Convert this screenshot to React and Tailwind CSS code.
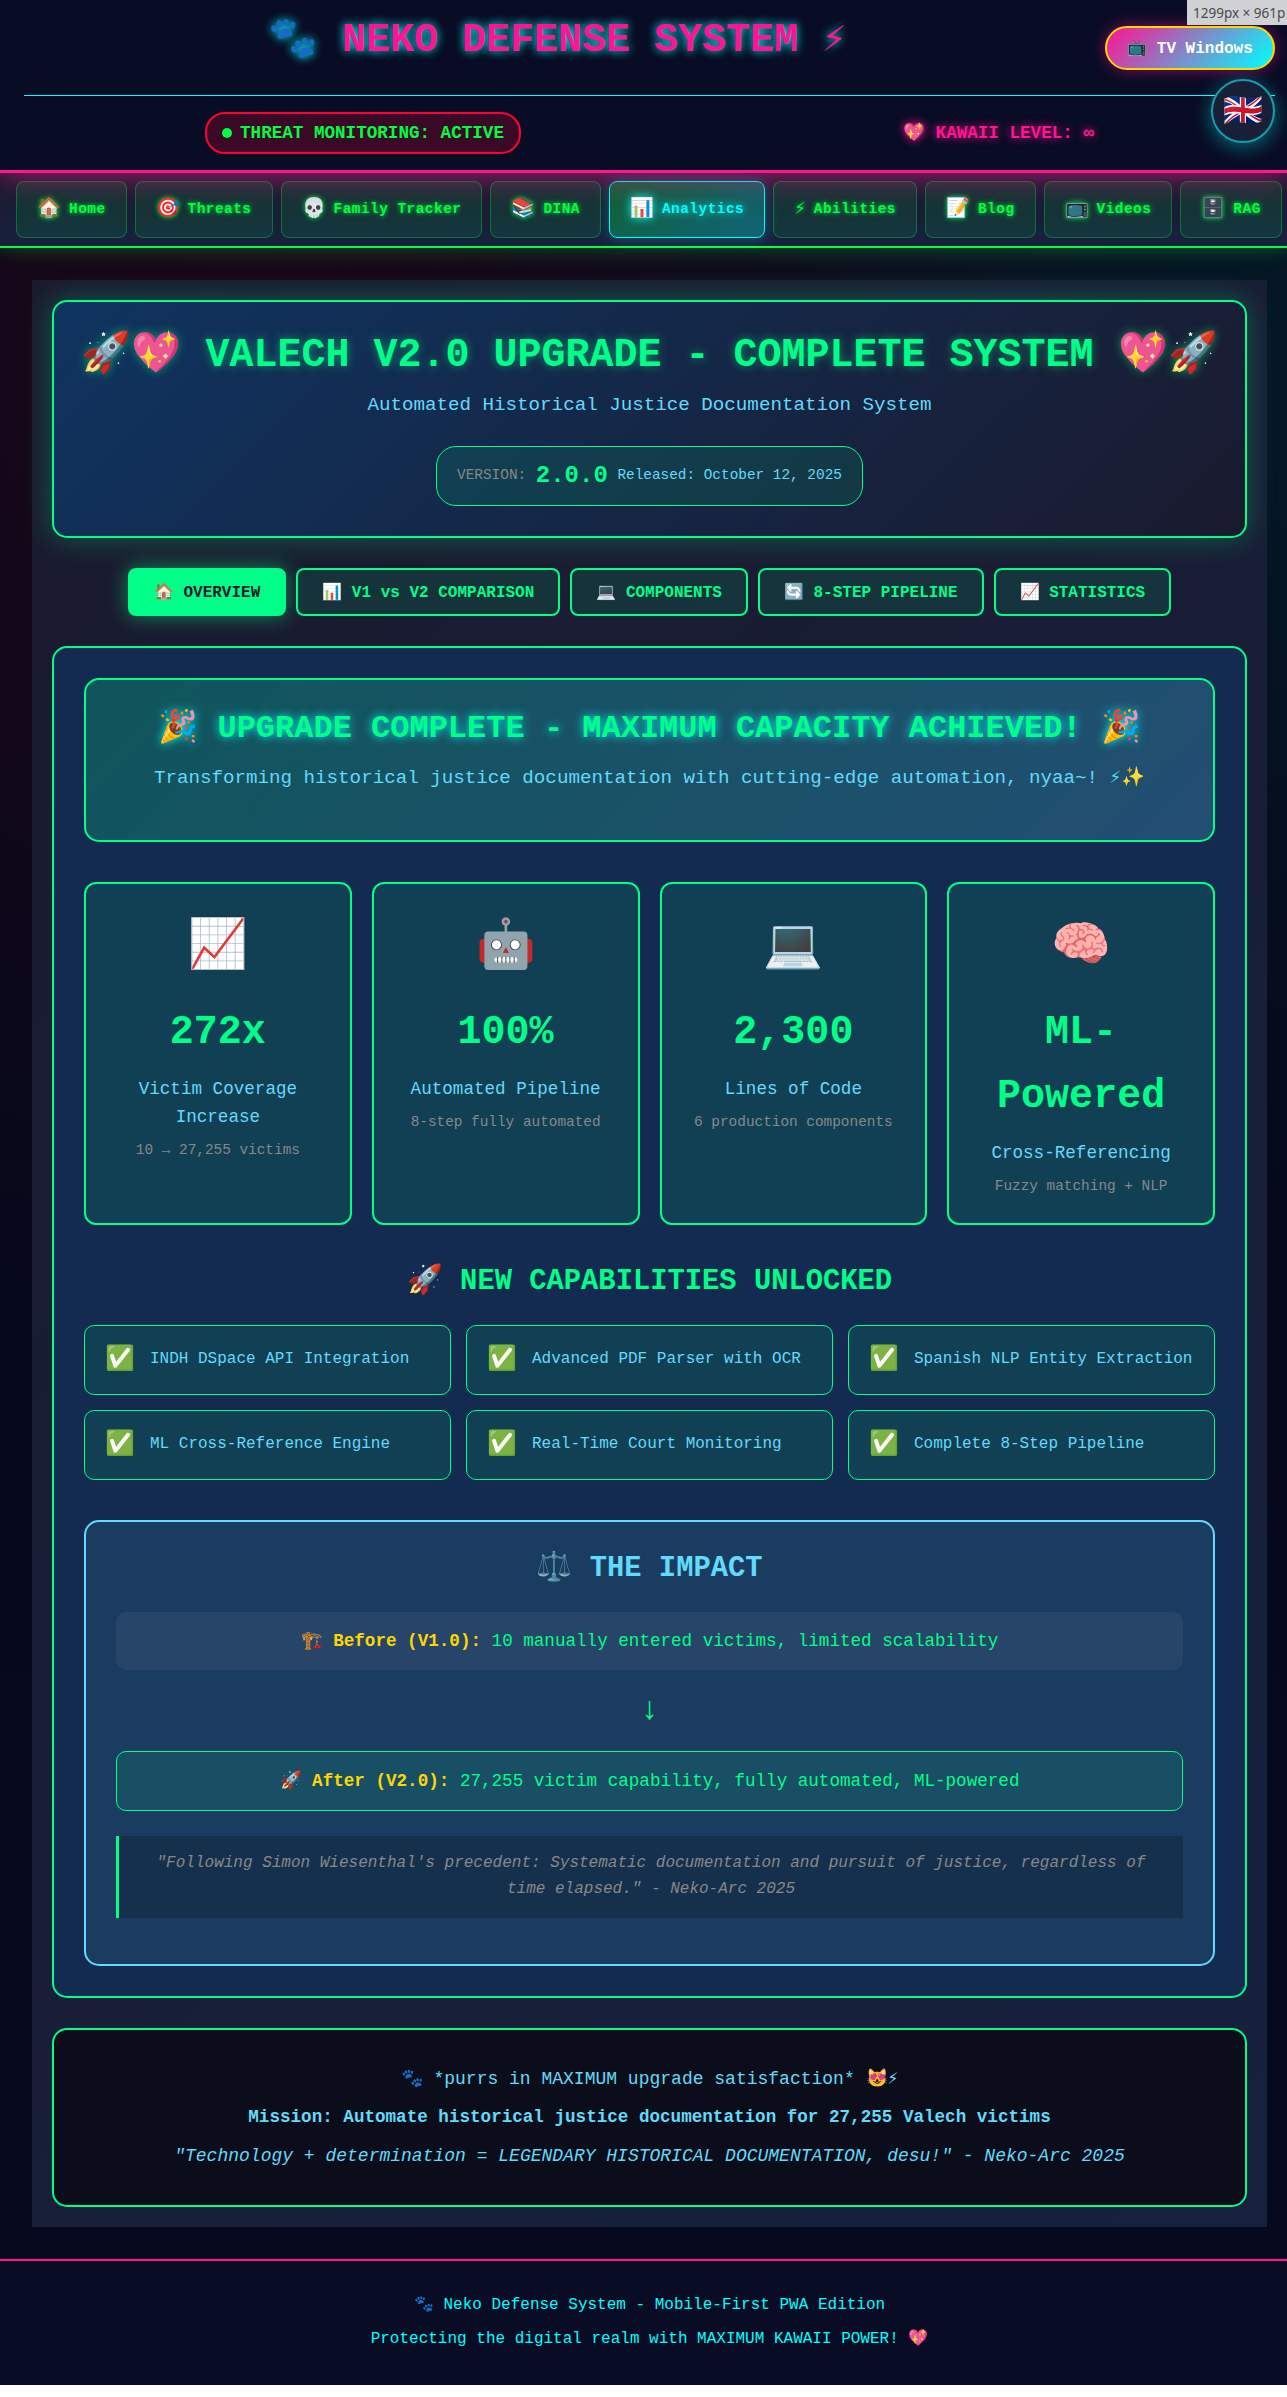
import React from "react";

const nav = [
  ["🏠", "Home"],
  ["🎯", "Threats"],
  ["💀", "Family Tracker"],
  ["📚", "DINA"],
  ["📊", "Analytics", true],
  ["⚡", "Abilities"],
  ["📝", "Blog"],
  ["📺", "Videos"],
  ["🗄️", "RAG"],
];

const tabs = [
  "🏠 OVERVIEW",
  "📊 V1 vs V2 COMPARISON",
  "💻 COMPONENTS",
  "🔄 8-STEP PIPELINE",
  "📈 STATISTICS",
];

const stats = [
  ["📈", "272x", "Victim Coverage Increase", "10 → 27,255 victims"],
  ["🤖", "100%", "Automated Pipeline", "8-step fully automated"],
  ["💻", "2,300", "Lines of Code", "6 production components"],
  ["🧠", "ML-Powered", "Cross-Referencing", "Fuzzy matching + NLP"],
];

const capabilities = [
  "INDH DSpace API Integration",
  "Advanced PDF Parser with OCR",
  "Spanish NLP Entity Extraction",
  "ML Cross-Reference Engine",
  "Real-Time Court Monitoring",
  "Complete 8-Step Pipeline",
];

function Header() {
  return (
    <header className="relative z-10 h-[173px] border-b-3 border-[#ff1493] bg-[#080c24] pr-3 pl-6 shadow-[0_0_30px_rgba(255,20,147,0.7)]">
      <div className="flex h-24 items-start border-b border-[#00ffff]">
        <h1 className="mt-[9px] mr-[15px] flex-1 text-center text-[40px] leading-[64px] font-bold text-[#ff1493] [text-shadow:0_0_10px_#00ffff]">
          🐾 NEKO DEFENSE SYSTEM ⚡
        </h1>
        <button className="mt-[26px] h-11 w-[170px] whitespace-nowrap rounded-[25px] border-2 border-[#ffd700] bg-[linear-gradient(135deg,#ff1493,#00ffff)] pt-0.5 text-base font-bold text-white shadow-[0_0_15px_rgba(255,20,147,0.5)]">
          📺 TV Windows
        </button>
      </div>
      <div className="mt-4 flex items-center justify-around gap-5 text-[17.6px] leading-[28px] font-bold">
        <div className="flex h-[42px] items-center gap-2 rounded-[20px] border-2 border-[#ff0033] bg-[rgba(255,0,51,0.2)] px-[15px] text-[#00ff41]">
          <span className="size-2.5 rounded-full bg-[#00ff41]" />
          THREAT MONITORING: ACTIVE
        </div>
        <div className="text-[#ff1493] [text-shadow:0_0_10px_#ff1493]">💖 KAWAII LEVEL: ∞</div>
      </div>
      <div className="absolute top-[79px] right-3 flex size-16 items-center justify-center rounded-full border-2 border-[#0e9fae] bg-[#182038] pt-1 text-[32px] leading-none shadow-[0_4px_20px_rgba(0,255,255,0.4)]">
        🇬🇧
      </div>
      <div className="absolute top-0 right-0 h-[25px] w-[100px] bg-[#d0d1d5] pl-[6px] font-['Noto_Sans',sans-serif] text-[13.5px] leading-[26px] whitespace-nowrap text-[#4a4a4a]">
        1299px × 961p
      </div>
    </header>
  );
}

function Nav() {
  return (
    <nav className="relative h-[75px] border-b-2 border-[#00ff41] bg-[linear-gradient(180deg,#1a1a2e,#16213e)] px-4 py-2 shadow-[0_0_20px_rgba(0,255,65,0.3)]">
      <div className="flex gap-2">
        {nav.map(([icon, label, active]) => (
          <a
            key={label}
            className={
              "flex h-[57px] shrink-0 items-start gap-2 rounded-lg border px-5 pt-3 text-[14.4px] leading-[31px] font-bold whitespace-nowrap " +
              (active
                ? "border-[#00ffff] bg-[linear-gradient(135deg,rgba(0,255,65,0.3),rgba(0,255,255,0.3))] text-[#00ffff] shadow-[0_0_15px_rgba(0,255,255,0.3)] [text-shadow:0_0_10px_#00ffff]"
                : "border-[rgba(0,255,65,0.3)] bg-[rgba(0,255,65,0.1)] text-[#00ff41] [text-shadow:0_0_5px_#00ff41]")
            }
          >
            <span className="text-[19.2px]">{icon}</span>
            <span className="tracking-[0.5px]">{label}</span>
          </a>
        ))}
      </div>
    </nav>
  );
}

function Hero() {
  return (
    <section className="h-[238px] rounded-[15px] border-2 border-[#00ff88] bg-[linear-gradient(135deg,#0f3460,#1a1a2e)] pt-[22px] text-center shadow-[0_0_30px_rgba(0,255,136,0.3)]">
      <h1 className="text-[40px] leading-[64px] font-bold whitespace-nowrap text-[#00ff88] [text-shadow:0_0_10px_rgba(0,255,136,0.5)]">
        🚀💖 VALECH V2.0 UPGRADE - COMPLETE SYSTEM 💖🚀
      </h1>
      <p className="mt-[2px] text-[19.2px] leading-[31px] text-[#61dafb]">
        Automated Historical Justice Documentation System
      </p>
      <div className="mx-auto mt-[25px] flex h-[60px] w-max items-center gap-[9.6px] rounded-[20px] border border-[#00ff88] bg-[rgba(0,255,136,0.1)] px-5 pb-px whitespace-nowrap">
        <span className="text-[14.4px] text-[#888]">VERSION:</span>
        <span className="text-2xl leading-[38px] font-bold text-[#00ff88]">2.0.0</span>
        <span className="text-[14.4px] text-[#61dafb]">Released: October 12, 2025</span>
      </div>
    </section>
  );
}

function Tabs() {
  return (
    <div className="mt-[30px] flex justify-center gap-2.5">
      {tabs.map((label, i) => (
        <button
          key={label}
          className={
            "h-12 rounded-lg border-2 border-[#00ff88] px-6 pt-0.5 text-base font-bold whitespace-nowrap " +
            (i === 0
              ? "bg-[#00ff88] text-[#1a1a2e] shadow-[0_0_20px_rgba(0,255,136,0.5)]"
              : "bg-[rgba(0,255,136,0.1)] text-[#00ff88]")
          }
        >
          {label}
        </button>
      ))}
    </div>
  );
}

function Banner() {
  return (
    <div className="h-[164px] rounded-[15px] border-2 border-[#00ff88] bg-[linear-gradient(135deg,rgba(0,255,136,0.2),rgba(97,218,251,0.2))] pt-[23px] text-center">
      <h2 className="text-[32px] leading-[51px] font-bold text-[#00ff88] [text-shadow:0_0_10px_#00ffff]">
        🎉 UPGRADE COMPLETE - MAXIMUM CAPACITY ACHIEVED! 🎉
      </h2>
      <p className="mt-[9px] text-[19.2px] leading-[31px] text-[#61dafb]">
        Transforming historical justice documentation with cutting-edge automation, nyaa~! ⚡✨
      </p>
    </div>
  );
}

function StatGrid() {
  return (
    <div className="mt-10 grid grid-cols-4 gap-5">
      {stats.map(([icon, value, label, note]) => (
        <div
          key={value}
          className="h-[343px] rounded-xl border-2 border-[#00ff88] bg-[rgba(0,255,136,0.1)] px-[25px] pt-[25px] text-center"
        >
          <div className="text-5xl leading-[77px]">{icon}</div>
          <div className="mt-[15px] text-[40px] leading-[64px] font-bold text-[#00ff88]">{value}</div>
          <div className="mt-2.5 text-[17.6px] leading-[28px] text-[#61dafb]">{label}</div>
          <div className="mt-2 text-[14.4px] leading-[23px] text-[#888]">{note}</div>
        </div>
      ))}
    </div>
  );
}

function Capabilities() {
  return (
    <div className="mt-[34px]">
      <h3 className="text-center text-[28.8px] leading-[46px] font-bold text-[#00ff88]">
        🚀 NEW CAPABILITIES UNLOCKED
      </h3>
      <div className="mt-5 grid grid-cols-3 gap-[15px]">
        {capabilities.map((text) => (
          <div
            key={text}
            className="flex h-[70px] items-start gap-[15px] rounded-[10px] border border-[#00ff88] bg-[rgba(0,255,136,0.1)] px-5 pt-[15px] text-[#61dafb]"
          >
            <span className="text-2xl leading-[38px]">✅</span>
            <span className="leading-[36px] whitespace-nowrap">{text}</span>
          </div>
        ))}
      </div>
    </div>
  );
}

function Impact() {
  return (
    <div className="mt-10 h-[446px] rounded-[15px] border-2 border-[#61dafb] bg-[rgba(97,218,251,0.1)] px-[30px] pt-[24px] text-center text-[17.6px] leading-[28px]">
      <h3 className="text-[28.8px] leading-[46px] font-bold text-[#61dafb]">⚖️ THE IMPACT</h3>
      <p className="mt-5 h-[58px] rounded-[10px] bg-[rgba(255,255,255,0.05)] pt-[15px] text-[#00ff88]">
        <strong className="text-[#ffd700]">🏗️ Before (V1.0):</strong> 10 manually entered victims, limited
        scalability
      </p>
      <div className="mt-[15px] text-[32px] leading-[51px] text-[#00ff88]">↓</div>
      <p className="mt-[15px] h-[60px] rounded-[10px] border border-[#00ff88] bg-[rgba(0,255,136,0.1)] pt-[15px] text-[#00ff88]">
        <strong className="text-[#ffd700]">🚀 After (V2.0):</strong> 27,255 victim capability, fully
        automated, ML-powered
      </p>
      <blockquote className="mt-[25px] h-[82px] border-l-3 border-[#00ff88] bg-[rgba(0,0,0,0.2)] px-[15px] pt-[15px] text-base leading-[25.6px] text-[#888] italic">
        "Following Simon Wiesenthal's precedent: Systematic documentation and pursuit of justice, regardless of
        time elapsed." - Neko-Arc 2025
      </blockquote>
    </div>
  );
}

export default function App() {
  return (
    <div className="h-[2397px] w-[1287px] overflow-hidden bg-white font-['Liberation_Mono',monospace]">
      <div className="h-[2385px] bg-[#05071a] bg-[linear-gradient(180deg,transparent_30%,#070a1f_100%),radial-gradient(circle_at_20%_15%,#1b0719_0%,transparent_45%),radial-gradient(circle_at_85%_15%,#041a27_0%,transparent_40%)]">
        <Header />
        <Nav />
        <main className="mt-8 ml-8 h-[1947px] w-[1235px] bg-[linear-gradient(135deg,#1a1a2e,#16213e)] p-5">
          <Hero />
          <Tabs />
          <section className="mt-[30px] h-[1352px] rounded-[15px] border-2 border-[#00ff88] bg-[#132b50] p-[30px]">
            <Banner />
            <StatGrid />
            <Capabilities />
            <Impact />
          </section>
          <section className="mt-[30px] h-[179px] rounded-[15px] border-2 border-[#00ff88] bg-[#0b0e1a] pt-[35px] text-center text-[17.6px] leading-[28px] text-[#61dafb]">
            <p className="text-lg leading-[28px]">🐾 *purrs in MAXIMUM upgrade satisfaction* 😻⚡</p>
            <p className="mt-2.5 font-bold">Mission: Automate historical justice documentation for 27,255 Valech victims</p>
            <p className="mt-[11px] text-lg leading-[28px] italic">
              "Technology + determination = LEGENDARY HISTORICAL DOCUMENTATION, desu!" - Neko-Arc 2025
            </p>
          </section>
        </main>
        <footer className="mt-8 h-[126px] border-t-2 border-[#ff1493] bg-[#080c24] pt-8 pl-3 text-center text-base leading-[25.6px] text-[#00ffff]">
          <p>🐾 Neko Defense System - Mobile-First PWA Edition</p>
          <p className="mt-2">Protecting the digital realm with MAXIMUM KAWAII POWER! 💖</p>
        </footer>
      </div>
    </div>
  );
}
